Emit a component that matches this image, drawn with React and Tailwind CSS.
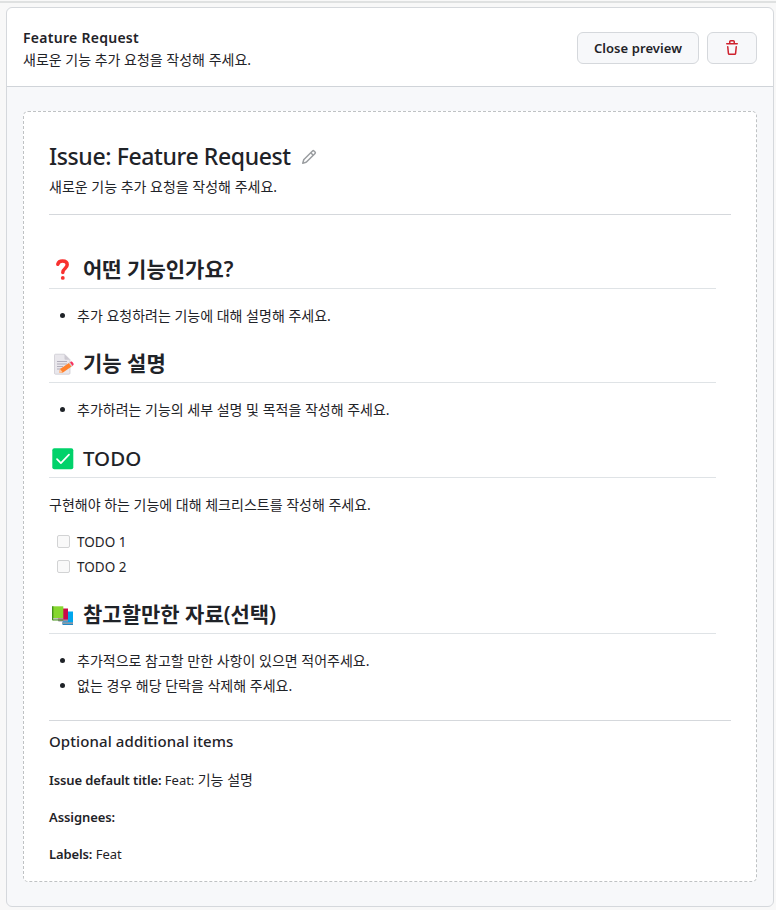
import React from "react";

const SANS = "font-['Noto_Sans','Noto_Sans_CJK_KR',sans-serif]";

function TrashIcon() {
  return (
    <svg width="16" height="16" viewBox="0 0 16 16" fill="#cf222e">
      <path d="M11 1.75V3h2.25a.75.75 0 0 1 0 1.5H2.75a.75.75 0 0 1 0-1.5H5V1.75C5 .784 5.784 0 6.75 0h2.5C10.216 0 11 .784 11 1.75ZM4.496 6.675l.66 6.6a.25.25 0 0 0 .249.225h5.19a.25.25 0 0 0 .249-.225l.66-6.6a.75.75 0 0 1 1.492.149l-.66 6.6A1.748 1.748 0 0 1 10.595 15h-5.19a1.75 1.75 0 0 1-1.741-1.575l-.66-6.6a.75.75 0 1 1 1.492-.15ZM6.5 1.75V3h3V1.75a.25.25 0 0 0-.25-.25h-2.5a.25.25 0 0 0-.25.25Z" />
    </svg>
  );
}

function PencilIcon() {
  return (
    <svg className="mt-px" width="16" height="16" viewBox="0 0 16 16" fill="#9a9da0">
      <path d="M11.013 1.427a1.75 1.75 0 0 1 2.474 0l1.086 1.086a1.75 1.75 0 0 1 0 2.474l-8.61 8.61c-.21.21-.47.364-.756.445l-3.251.93a.75.75 0 0 1-.927-.928l.929-3.25c.081-.286.235-.547.445-.758l8.61-8.61Zm.176 4.823L9.75 4.81l-6.286 6.287a.253.253 0 0 0-.064.108l-.558 1.953 1.953-.558a.253.253 0 0 0 .108-.064Zm1.238-3.763a.25.25 0 0 0-.354 0L10.811 3.75l1.439 1.44 1.263-1.263a.25.25 0 0 0 0-.354Z" />
    </svg>
  );
}

function QuestionEmoji() {
  return (
    <svg width="26" height="26" viewBox="0 0 26 26" fill="none">
      <path d="M7.800 7.200C8.500 4.700 10.300 4 12.500 4c2.800 0 4.700 1.400 4.700 3.800 0 3.800-4.400 3.600-4.400 7.700" stroke="#f8312f" strokeWidth="3.500" strokeLinecap="round" />
      <circle cx="12.800" cy="20.900" r="1.900" fill="#f8312f" />
    </svg>
  );
}

function MemoEmoji() {
  return (
    <svg width="26" height="26" viewBox="0 0 26 26" fill="none">
      <path d="M5.500 3.200h9l5.500 5.500v13.500a1 1 0 0 1-1 1H5.500a1 1 0 0 1-1-1v-18a1 1 0 0 1 1-1Z" fill="#e9e7ec" stroke="#c8c5ce" strokeWidth=".7" />
      <path d="M14.500 3.200v4.500a1 1 0 0 0 1 1H20Z" fill="#cdcad2" />
      <path d="M7 10.500h10M7 13h10M7 15.500h6M7 18h4" stroke="#aaa6b4" strokeWidth=".9" />
      <path d="m10 18 9.700-6.600 2.600 3.700-9.700 6.600-3.300.3Z" fill="#ff822d" />
      <path d="m10 18-1 4 3.800-.4Z" fill="#fcc9a4" />
      <path d="m18.800 12 1.200-.8 2.600 3.700-1.200.8Z" fill="#d3d3d3" />
      <path d="m20 11.200 1-.7c1.200-.7 3.500 2.500 2.400 3.500l-.9.900Z" fill="#f8315f" />
    </svg>
  );
}

function CheckEmoji() {
  return (
    <svg width="26" height="26" viewBox="0 0 26 26" fill="none">
      <rect x="2.300" y="2.300" width="21" height="21" rx="2" fill="#00d26a" />
      <path d="m7 13.200 3.900 3.900L19 8.700" stroke="#fff" strokeWidth="1.700" strokeLinecap="round" strokeLinejoin="round" />
    </svg>
  );
}

function BooksEmoji() {
  return (
    <svg width="26" height="26" viewBox="0 0 26 26" fill="none">
      <path d="M13 9.500h10v13H12.500Z" fill="#00a6ed" />
      <path d="M12 20.300h11v2h-10a1.300 1.300 0 0 1-1-1.300Z" fill="#8a9aa8" />
      <path d="M12.300 22.200H23v.9H13Z" fill="#0074ba" />
      <path d="M8 6.500h10v12H8Z" fill="#ca0b4a" />
      <path d="M7.500 17.500H18v2H8.500Z" fill="#998ea4" />
      <path d="M2.500 4.300h10.800v12H2.500Z" fill="#86d72f" />
      <path d="M2 4.300h1.400v14H2Z" fill="#44911b" />
      <path d="M3 16.300h10.300v1.300H3Z" fill="#b4acbc" />
      <path d="M2.200 17.600h11.100v.9H3Z" fill="#44911b" />
    </svg>
  );
}

function Heading({ icon, children, className = "" }) {
  return (
    <h2 className={"mr-[15px] flex h-[38px] items-start border-b border-[#dfe3e6] leading-[36px] " + className}>
      <span className="mt-[6px] ml-px mr-[7px] block w-[26px] shrink-0">{icon}</span>
      <span className="whitespace-nowrap">{children}</span>
    </h2>
  );
}

function Bullet({ children }) {
  return (
    <li className="flex h-[25px] items-center pl-[11px] text-[14px]">
      <span className="mr-[12px] size-[5px] rounded-full bg-[#1f2328]" />
      <span className="whitespace-nowrap">{children}</span>
    </li>
  );
}

function Todo({ children }) {
  return (
    <li className="flex h-[25px] items-center pl-2">
      <span className="mr-[7px] size-[13px] rounded-[2px] border border-[#d2d3d4] bg-[#f9f9f9]" />
      <span className="pt-px text-[13.5px]">{children}</span>
    </li>
  );
}

export default function App() {
  return (
    <div className={"h-[910px] w-[776px] overflow-hidden bg-[#f8f8f8] pt-px text-[13px] text-[#1f2328] " + SANS}>
      <div className="h-[2px] bg-[#dfe1e1]" />
      <main className="mt-1 ml-[6px] h-[900px] w-[768px] rounded-md border border-[#d5d8dc] bg-[#f7f8fa]">
        <header className="flex h-[79px] items-start justify-between rounded-t-md border-b border-[#d0d4d9] bg-white px-4">
          <div className="pt-[19px]">
            <h1 className="h-[22px] text-[14px] font-semibold leading-[22px] tracking-[0.28px]">Feature Request</h1>
            <p className="text-[14px] leading-[21px]">새로운 기능 추가 요청을 작성해 주세요.</p>
          </div>
          <div className="flex gap-2 pt-6">
            <button className="h-8 w-[122px] rounded-md border border-[#d5d8dc] bg-[#f7f8fa] pb-px text-[13px] font-semibold leading-[30px] tracking-[0.08px]">Close preview</button>
            <button className="flex h-8 w-[50px] items-center justify-center rounded-md border border-[#d5d8dc] bg-[#f7f8fa]"><TrashIcon /></button>
          </div>
        </header>
        <section className="mt-6 ml-4 h-[771px] w-[734px] rounded-[5px] border border-dashed border-[#bfc2c4] bg-white px-[25px]">
          <div className="flex h-[103px] flex-col border-b border-[#d5d8dc] pt-[28px]">
            <div className="flex h-[32px] items-center gap-[10px]">
              <h2 className="whitespace-nowrap text-[23px] font-medium leading-[32px] tracking-[-0.38px]">Issue: Feature Request</h2>
              <PencilIcon />
            </div>
            <p className="mt-[4px] text-[14px] leading-[22px]">새로운 기능 추가 요청을 작성해 주세요.</p>
          </div>
          <Heading className="mt-[36px] text-[21px] font-semibold" icon={<QuestionEmoji />}>어떤 기능인가요?</Heading>
          <ul className="mt-[14px]"><Bullet>추가 요청하려는 기능에 대해 설명해 주세요.</Bullet></ul>
          <Heading className="mt-[17px] text-[21px] font-semibold" icon={<MemoEmoji />}>기능 설명</Heading>
          <ul className="mt-[14px]"><Bullet>추가하려는 기능의 세부 설명 및 목적을 작성해 주세요.</Bullet></ul>
          <Heading className="mt-[18px] text-[20.5px] font-medium" icon={<CheckEmoji />}>TODO</Heading>
          <p className="mt-[14px] h-[25px] text-[14px] leading-[25px]">구현해야 하는 기능에 대해 체크리스트를 작성해 주세요.</p>
          <ul className="mt-[12px]">
            <Todo>TODO 1</Todo>
            <Todo>TODO 2</Todo>
          </ul>
          <Heading className="mt-[17px] text-[21px] font-semibold" icon={<BooksEmoji />}>참고할만한 자료(선택)</Heading>
          <ul className="mt-[14px]">
            <Bullet>추가적으로 참고할 만한 사항이 있으면 적어주세요.</Bullet>
            <Bullet>없는 경우 해당 단락을 삭제해 주세요.</Bullet>
          </ul>
          <div className="mt-[22px] border-t border-[#d5d8dc] pt-[8px]">
            <h3 className="h-[24px] text-[15px] font-medium leading-[24px] tracking-[0.1px]">Optional additional items</h3>
            <p className="mt-[16px] h-[22px] leading-[22px]"><b className="font-semibold tracking-[-0.12px]">Issue default title:</b> Feat: <span className="text-[14px]">기능 설명</span></p>
            <p className="mt-[15px] h-[22px] leading-[22px]"><b className="font-semibold tracking-[-0.08px]">Assignees:</b></p>
            <p className="mt-[15px] h-[22px] leading-[22px]"><b className="font-semibold tracking-[-0.12px]">Labels:</b> Feat</p>
          </div>
        </section>
      </main>
    </div>
  );
}
